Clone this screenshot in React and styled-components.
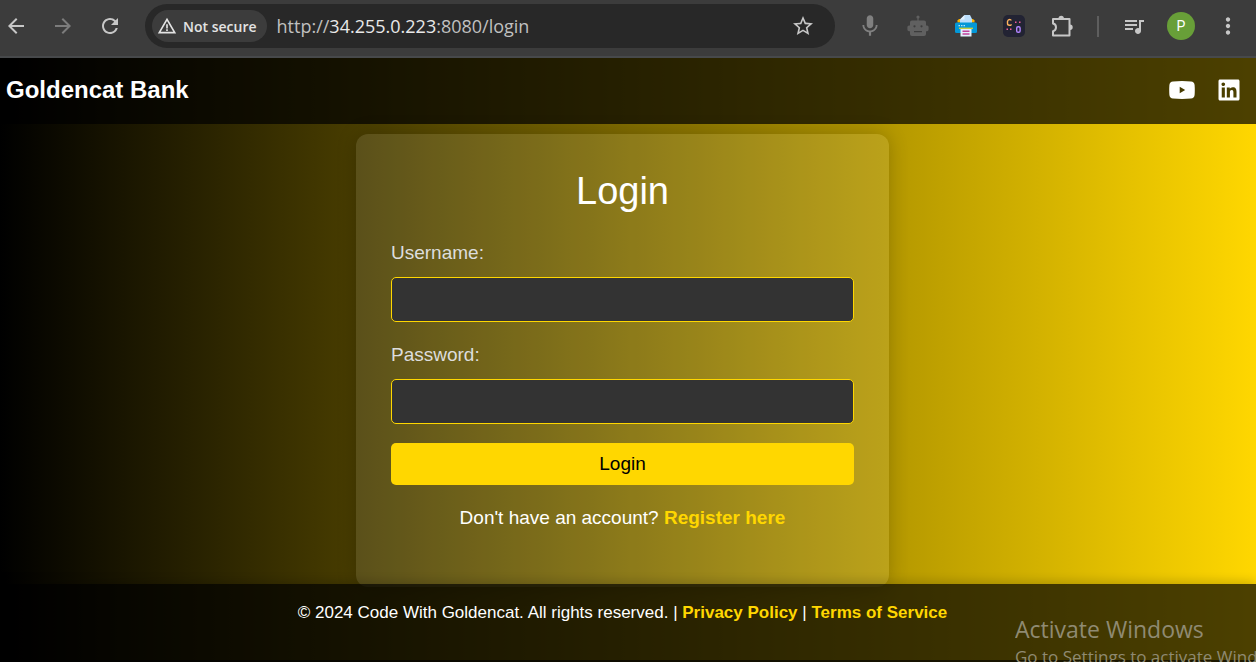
import React from "react";
import styled, { createGlobalStyle } from "styled-components";
import {
  MdArrowBack, MdArrowForward, MdRefresh, MdWarningAmber, MdStarBorder,
  MdMic, MdQueueMusic, MdMoreVert,
} from "react-icons/md";
import { FaLinkedin } from "react-icons/fa";

const GlobalStyle = createGlobalStyle`
  *, *::before, *::after { box-sizing: border-box; }
  body { margin: 0; font-family: "Liberation Sans", Arial, sans-serif; }
`;

const Window = styled.div`
  position: relative;
  display: flex;
  flex-direction: column;
  min-height: 100vh;
  overflow: hidden;
`;

const Toolbar = styled.div`
  display: flex;
  align-items: center;
  gap: 21px;
  height: 58px;
  padding: 0 14px 4px 2px;
  background: #3c3c3c;
  border-bottom: 2px solid #47494b;
  font-family: "Open Sans", "Noto Sans", sans-serif;
`;

const IconGroup = styled.div`
  display: flex;
  align-items: center;
  gap: ${(p) => p.$gap || 19}px;
`;

const IconButton = styled.button`
  display: flex;
  align-items: center;
  justify-content: center;
  width: 28px;
  height: 28px;
  padding: 0;
  border: 0;
  background: none;
  color: ${(p) => p.$color || "#c7c7c7"};
`;

const AddressBar = styled.div`
  display: flex;
  align-items: center;
  flex: 1;
  min-width: 0;
  height: 44px;
  padding: 0 18px 0 7px;
  border-radius: 22px;
  background: #282828;
`;

const SecurityChip = styled.button`
  display: flex;
  align-items: center;
  gap: 6px;
  height: 32px;
  padding: 0 10px 0 5px;
  border: 0;
  border-radius: 16px;
  background: #3c3c3c;
  color: #e3e3e3;
  font: 600 14px "Open Sans", sans-serif;
  white-space: nowrap;
`;

const Url = styled.div`
  flex: 1;
  margin-left: 10px;
  overflow: hidden;
  color: #c0c0c0;
  font-size: 18px;
  line-height: 24px;
  white-space: nowrap;
  outline: none;
`;

const Host = styled.span`
  color: #e8e8e8;
`;

const Divider = styled.span`
  width: 2px;
  height: 21px;
  margin: 0 2px;
  background: #5e5e5e;
`;

const Avatar = styled.button`
  width: 28px;
  height: 28px;
  padding: 0;
  border: 0;
  border-radius: 50%;
  background: #689f38;
  color: #fff;
  font: 14px Roboto, sans-serif;
`;

const Page = styled.div`
  display: flex;
  flex: 1;
  flex-direction: column;
  background: linear-gradient(to right, #000, #ffd700);
  color: #fff;
`;

const Header = styled.header`
  display: flex;
  align-items: center;
  justify-content: space-between;
  height: 66px;
  padding: 0 15px 2px 6px;
  background: rgba(0, 0, 0, 0.7);
`;

const Brand = styled.h1`
  margin: 0;
  font-size: 24px;
  line-height: 28px;
`;

const SocialLinks = styled.nav`
  display: flex;
  align-items: center;
  gap: 22px;
`;

const SocialLink = styled.a`
  display: flex;
  color: #fff;
`;

const Main = styled.main`
  display: flex;
  flex: 1;
  align-items: flex-start;
  justify-content: center;
  padding: 10px 11px 0 0;
  margin-bottom: -3px;
`;

const Card = styled.form`
  display: flex;
  flex-direction: column;
  width: 100%;
  max-width: 533px;
  padding: 35px 35px 58px;
  border-radius: 12px;
  background: rgba(255, 255, 255, 0.1);
  box-shadow: 0 0 20px rgba(0, 0, 0, 0.2);
  font-size: 19px;
  line-height: 22px;
`;

const Title = styled.h2`
  margin: 0 0 29px;
  font-size: 38px;
  font-weight: 400;
  line-height: 44px;
  text-align: center;
`;

const Label = styled.label`
  margin-bottom: 13px;
  color: #ddd;
`;

const Field = styled.input`
  height: 45px;
  margin-bottom: ${(p) => (p.$last ? "19px" : "22px")};
  padding: 0 12px;
  border: 1px solid #ffd700;
  border-radius: 5px;
  background: #333;
  color: #fff;
  font: inherit;
`;

const Submit = styled.button`
  height: 42px;
  margin-bottom: 22px;
  padding: 0;
  border: 0;
  border-radius: 5px;
  background: #ffd700;
  color: #000;
  font: inherit;
`;

const Hint = styled.p`
  margin: 0;
  text-align: center;
`;

const GoldLink = styled.a`
  color: #ffd700;
  font-weight: 700;
  text-decoration: none;
`;

const Footer = styled.footer`
  position: relative;
  height: 78px;
  padding: 19px 11px 0 0;
  border-bottom: 2px solid rgba(0, 0, 0, 0.6);
  background: rgba(0, 0, 0, 0.7);
  box-shadow: 0 -2px 10px rgba(0, 0, 0, 0.2);
  font-size: 17px;
  line-height: 20px;
  text-align: center;
`;

const Watermark = styled.div`
  position: absolute;
  right: 0;
  bottom: 0;
  width: 241px;
  height: 49px;
  overflow: hidden;
  color: #8f8a72;
  font-family: "Open Sans", "Noto Sans", sans-serif;
  white-space: nowrap;
  pointer-events: none;
`;

const WatermarkTitle = styled.div`
  font-size: 23px;
  line-height: 32px;
`;

const WatermarkText = styled.div`
  font-size: 17px;
  line-height: 24px;
`;

const Robot = () => (
  <svg width="22" height="22" viewBox="0 0 22 22" fill="currentColor">
    <circle cx="11" cy="2" r="1.6" />
    <path d="M10.4 2h1.2v4h-1.2z" />
    <path fillRule="evenodd" d="M5 5.500h12a2 2 0 0 1 2 2V10.500h1a1.600 1.600 0 0 1 1.600 1.600v2.500A1.600 1.600 0 0 1 20 16.200h-1V19a2 2 0 0 1-2 2H5a2 2 0 0 1-2-2v-2.800H2A1.600 1.600 0 0 1 .4 14.600v-2.500A1.600 1.600 0 0 1 2 10.500h1V7.500a2 2 0 0 1 2-2zM7.500 10.200a1.100 1.100 0 1 0 0 2.200 1.100 1.100 0 0 0 0-2.200zm7 0a1.100 1.100 0 1 0 0 2.200 1.100 1.100 0 0 0 0-2.200zM7 16v1.200h8V16z" />
  </svg>
);

const Printer = () => (
  <svg width="22" height="22" viewBox="0 0 22 22">
    <path fill="#ffb300" d="M2.500 7.500V5.500L4 4h14l1.500 1.500v2z" />
    <path fill="#bbdefb" d="M5 8V4.500L9.500 0H15l2 4v4z" />
    <path fill="#e3f2fd" d="M5 4.500h4.500V0z" />
    <rect y="7.500" width="22" height="10.500" rx="1.500" fill="#0398d8" />
    <path fill="#b3e5fc" d="M3.500 10H5v1.200H3.500zM6 10h1.500v1.200H6zM8.500 10H10v1.200H8.500z" />
    <path fill="#c6cf3e" d="M4 12.600h14V14H4z" />
    <path fill="#e3f2fd" d="M5.500 14h11v7.500h-11z" />
    <path fill="#c2419b" d="M7.500 15.500h7V17h-7zM7.500 18.300h7v1.400h-7z" />
  </svg>
);

const CodeBadge = () => (
  <svg width="22" height="22" viewBox="0 0 22 22" fill="none">
    <rect width="22" height="22" rx="5" fill="#222333" />
    <path d="M8 5.500Q8 4.500 6.500 4.500T4.500 6.500V8.500Q4.500 10.300 6.500 10.300T8 9.300" stroke="#ffb45e" strokeWidth="1.400" />
    <rect x="13.700" y="11.700" width="3.400" height="5.600" rx="1.400" stroke="#b284ff" strokeWidth="1.400" />
    <path fill="#f05a9c" d="M12 6.500h1.500V8H12zM16 6.500h1.500V8H16zM3.500 13.500H5V15H3.500zM7 13.500h1.500V15H7z" />
  </svg>
);

const Puzzle = () => (
  <svg width="22" height="22" viewBox="0 0 22 22">
    <path fill="none" stroke="currentColor" strokeWidth="2" strokeLinejoin="round" d="M2 4h16.500V20.500H2V16.200c2-.4 3-2 3-3.900S4 8.800 2 8.400z" />
    <path fill="currentColor" d="M7.500 3.500a2.700 2.700 0 0 1 5.400 0zM19 9.500a2.700 2.700 0 0 1 0 5.400z" />
  </svg>
);

const YouTube = () => (
  <svg width="26" height="18" viewBox="0 0 26 18">
    <path fill="currentColor" fillRule="evenodd" d="M4 .4Q13-.2 22 .4 25.200.6 25.600 4q.4 5 0 10-.4 3.400-3.600 3.600-9 .6-18 0Q.8 17.400.4 14 0 9 .4 4 .8.6 4 .4zM10.700 5.800v6.400L16.200 9z" />
  </svg>
);

export default function App() {
  return (
    <Window>
      <GlobalStyle />
      <Toolbar>
        <IconGroup>
          <IconButton aria-label="Back"><MdArrowBack size={24} /></IconButton>
          <IconButton aria-label="Forward" $color="#7c7c7c"><MdArrowForward size={24} /></IconButton>
          <IconButton aria-label="Reload"><MdRefresh size={24} /></IconButton>
        </IconGroup>
        <AddressBar>
          <SecurityChip><MdWarningAmber size={20} />Not secure</SecurityChip>
          <Url role="textbox" aria-label="Address" contentEditable suppressContentEditableWarning spellCheck={false}>
            http://<Host>34.255.0.223</Host>:8080/login
          </Url>
          <IconButton aria-label="Bookmark"><MdStarBorder size={24} /></IconButton>
        </AddressBar>
        <IconGroup>
          <IconGroup $gap={20}>
            <IconButton aria-label="Voice" $color="#808080"><MdMic size={26} /></IconButton>
            <IconButton aria-label="Assistant" $color="#606060"><Robot /></IconButton>
            <IconButton aria-label="Print"><Printer /></IconButton>
            <IconButton aria-label="Code"><CodeBadge /></IconButton>
            <IconButton aria-label="Extensions"><Puzzle /></IconButton>
          </IconGroup>
          <Divider />
          <IconButton aria-label="Media"><MdQueueMusic size={24} /></IconButton>
          <Avatar>P</Avatar>
          <IconButton aria-label="Menu"><MdMoreVert size={26} /></IconButton>
        </IconGroup>
      </Toolbar>
      <Page>
        <Header>
          <Brand>Goldencat Bank</Brand>
          <SocialLinks>
            <SocialLink href="#youtube" aria-label="YouTube"><YouTube /></SocialLink>
            <SocialLink href="#linkedin" aria-label="LinkedIn"><FaLinkedin size={24} /></SocialLink>
          </SocialLinks>
        </Header>
        <Main>
          <Card onSubmit={(e) => e.preventDefault()}>
            <Title>Login</Title>
            <Label htmlFor="username">Username:</Label>
            <Field id="username" type="text" />
            <Label htmlFor="password">Password:</Label>
            <Field id="password" type="password" $last />
            <Submit type="submit">Login</Submit>
            <Hint>Don't have an account? <GoldLink href="#register">Register here</GoldLink></Hint>
          </Card>
        </Main>
        <Footer>
          © 2024 Code With Goldencat. All rights reserved. | <GoldLink href="#privacy">Privacy Policy</GoldLink> | <GoldLink href="#terms">Terms of Service</GoldLink>
        </Footer>
      </Page>
      <Watermark>
        <WatermarkTitle>Activate Windows</WatermarkTitle>
        <WatermarkText>Go to Settings to activate Windows.</WatermarkText>
      </Watermark>
    </Window>
  );
}
